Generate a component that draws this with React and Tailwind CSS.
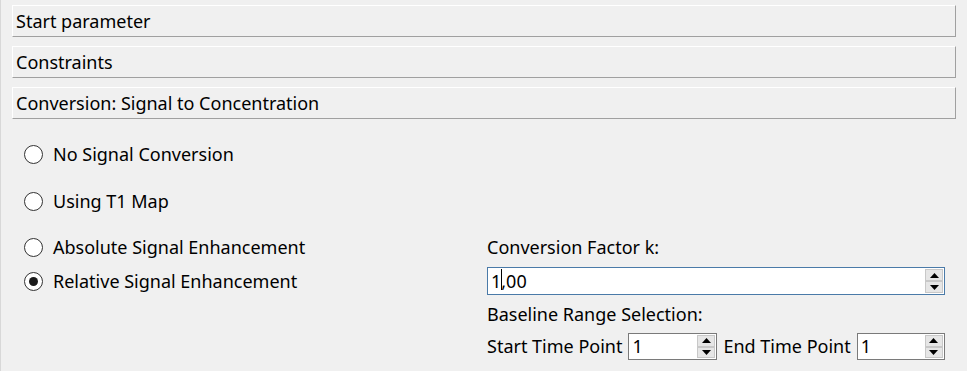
import React from "react";

const font = { fontFamily: '"Noto Sans", "Open Sans", sans-serif' };

function Header({ children }) {
  return (
    <div className="h-[32px] border-t border-l border-t-white border-l-white border-b border-r border-b-[#a0a0a0] border-r-[#a0a0a0] flex items-center pl-[3px] text-[18px] text-black">
      {children}
    </div>
  );
}

function Radio({ checked, label }) {
  return (
    <div className="flex items-center h-[22px]">
      <div className="w-[19px] h-[19px] rounded-full border border-[#333] bg-white flex items-center justify-center ml-[23px] mr-[10px]">
        {checked && <div className="w-[9px] h-[9px] rounded-full bg-[#1a1a1a]" />}
      </div>
      <span className="text-[18px] text-black">{label}</span>
    </div>
  );
}

function SpinButtons() {
  return (
    <div className="flex flex-col w-[19px] h-full py-[1px] pr-[1px]">
      <div className="flex-1 border border-[#c8c8c8] bg-[#e6e6e6] flex items-center justify-center">
        <svg width="9" height="5" viewBox="0 0 9 5"><path d="M4.5 0 L9 5 L0 5 Z" fill="#000" /></svg>
      </div>
      <div className="flex-1 border border-[#c8c8c8] bg-[#e6e6e6] flex items-center justify-center">
        <svg width="9" height="5" viewBox="0 0 9 5"><path d="M0 0 L9 0 L4.5 5 Z" fill="#000" /></svg>
      </div>
    </div>
  );
}

function SpinBox({ value, width, focused, caret }) {
  return (
    <div
      className={`flex items-stretch bg-white border ${focused ? "border-[#4a7aa8]" : "border-[#7a7a7a]"} h-full shrink-0`}
      style={{ width }}
    >
      <div className="flex-1 flex items-center pl-[3px] text-[18px] text-black relative">
        {caret ? (
          <span className="relative">
            1<span className="absolute left-[10px] top-[1px] w-[1px] h-[21px] bg-black" />,00
          </span>
        ) : (
          value
        )}
      </div>
      <SpinButtons />
    </div>
  );
}

export default function App() {
  return (
    <div className="w-[967px] h-[371px] bg-[#f0f0f0] border-l border-l-[#d8d8d8] overflow-hidden" style={font}>
      <div className="pl-[11px] pr-[11px] pt-[5px] flex flex-col gap-[9px]">
        <Header>Start parameter</Header>
        <Header>Constraints</Header>
        <Header>Conversion: Signal to Concentration</Header>
      </div>
      <div className="mt-[24px]">
        <Radio label="No Signal Conversion" />
        <div className="h-[25px]" />
        <Radio label="Using T1 Map" />
        <div className="h-[24px]" />
        <div className="flex">
          <div className="w-[486px] shrink-0 flex flex-col gap-[12px]">
            <Radio label="Absolute Signal Enhancement" />
            <Radio checked label="Relative Signal Enhancement" />
          </div>
          <div className="flex flex-col">
            <div className="h-[22px] flex items-center text-[18px] text-black">Conversion Factor k:</div>
            <div className="h-[28px] mt-[9px]">
              <SpinBox width={458} focused caret />
            </div>
            <div className="h-[22px] mt-[8px] flex items-center text-[18px] text-black">Baseline Range Selection:</div>
            <div className="h-[27px] mt-[8px] flex items-center text-[18px] text-black whitespace-nowrap">
              <span>Start Time Point</span>
              <div className="h-full ml-[6px]">
                <SpinBox value="1" width={89} />
              </div>
              <span className="ml-[6px]">End Time Point</span>
              <div className="h-full ml-[6px]">
                <SpinBox value="1" width={88} />
              </div>
            </div>
          </div>
        </div>
      </div>
    </div>
  );
}
